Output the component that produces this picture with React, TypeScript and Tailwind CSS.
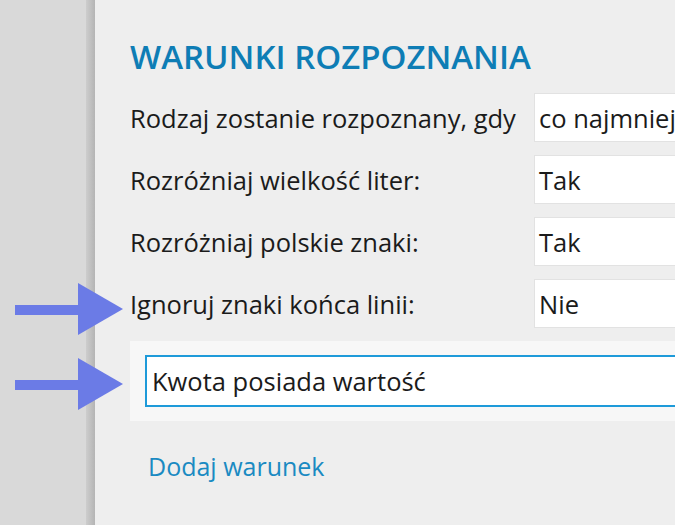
import React from "react";

type Row = {
  label: string;
  value: string;
};

const rows: Row[] = [
  { label: "Rodzaj zostanie rozpoznany, gdy", value: "co najmniej" },
  { label: "Rozróżniaj wielkość liter:", value: "Tak" },
  { label: "Rozróżniaj polskie znaki:", value: "Tak" },
  { label: "Ignoruj znaki końca linii:", value: "Nie" },
];

const Arrows: React.FC = () => (
  <svg
    className="absolute left-0 top-0 pointer-events-none"
    width="130"
    height="525"
    viewBox="0 0 130 525"
  >
    {/* upper arrow */}
    <rect x="15" y="305" width="66" height="10" fill="#6b7be6" />
    <polygon points="78,283 123,309 78,335" fill="#6b7be6" />
    {/* lower arrow */}
    <rect x="15" y="380" width="66" height="10" fill="#6b7be6" />
    <polygon points="78,358 123,384 78,410" fill="#6b7be6" />
  </svg>
);

const App: React.FC = () => {
  return (
    <div
      className="relative flex w-[675px] h-[525px] overflow-hidden bg-[#eeeeee] text-[#1b1b1b]"
      style={{ fontFamily: '"Open Sans", "Noto Sans", sans-serif' }}
    >
      {/* Left side strip with shadow edge */}
      <div className="w-[86px] shrink-0 bg-[#d9d9d9]" />
      <div className="w-[9px] shrink-0 bg-gradient-to-r from-[#cdcdcd] to-[#b4b4b4]" />

      {/* Panel (continues past the right edge of the window) */}
      <div className="flex-1 min-w-0 pl-[35px] pt-[37px] -mr-[40px]">
        <h2 className="text-[33px] leading-[40px] font-semibold text-[#0e7db5] whitespace-nowrap">
          WARUNKI ROZPOZNANIA
        </h2>

        <div className="mt-[16px] flex flex-col gap-[13px]">
          {rows.map((row, i) => (
            <div key={i} className="flex items-center h-[49px]">
              <div className="w-[404px] shrink-0 text-[25.5px] leading-[34px] whitespace-nowrap">
                {row.label}
              </div>
              <div className="flex-1 h-full flex items-center pl-[4px] bg-white border border-[#e2e2e2] text-[25.5px] leading-[34px] whitespace-nowrap overflow-hidden">
                {row.value}
              </div>
            </div>
          ))}
        </div>

        {/* Selected condition */}
        <div className="mt-[13px] h-[80px] bg-[#f7f7f7] pl-[15px] flex items-center">
          <div className="flex-1 h-[52px] bg-white border-2 border-[#1e9ad9] flex items-center pl-[5px] text-[25.5px] leading-[34px] whitespace-nowrap">
            Kwota posiada wartość
          </div>
        </div>

        <div className="mt-[28px] pl-[18px] text-[25px] leading-[34px] text-[#1a8ac2]">
          Dodaj warunek
        </div>
      </div>

      <Arrows />
    </div>
  );
};

export default App;
